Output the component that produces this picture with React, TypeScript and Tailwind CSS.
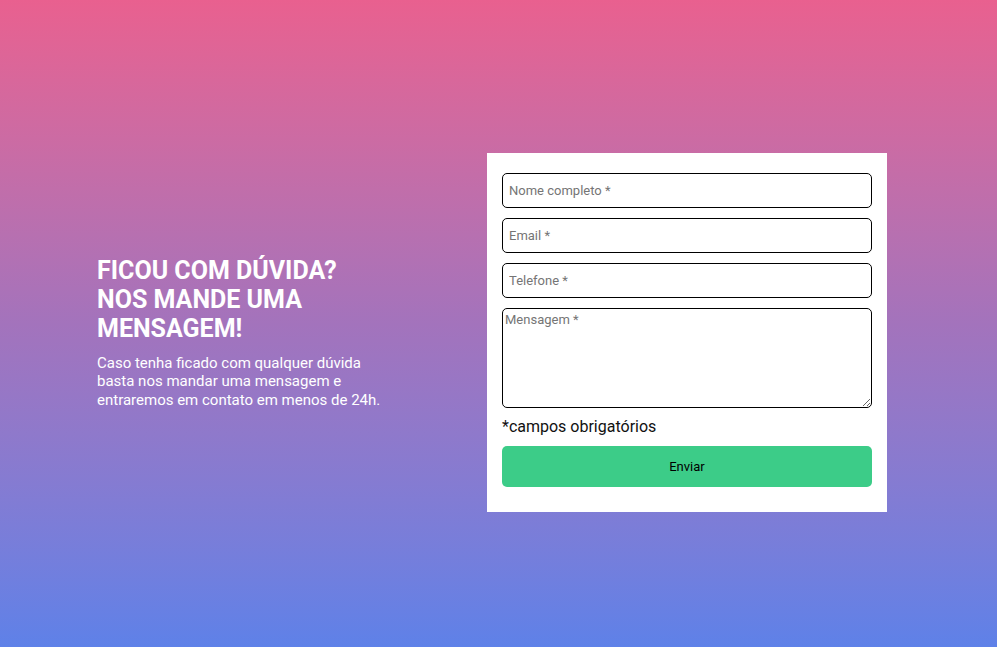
import React from "react";

export default function App() {
  return (
    <div
      className="w-full h-[647px] flex items-center pt-[18px] bg-gradient-to-b from-[#e9608f] via-[#a373bc] to-[#5e81e8]"
      style={{ fontFamily: "Roboto, 'Liberation Sans', sans-serif" }}
    >
      <div className="flex items-center pl-[97px]">
        <div className="w-[390px] pr-[105px] text-white">
          <h1 className="text-[25px] leading-[29px] font-bold">FICOU COM DÚVIDA? NOS MANDE UMA MENSAGEM!</h1>
          <p className="mt-[11px] text-[15px] leading-[18.5px]">
            Caso tenha ficado com qualquer dúvida basta nos mandar uma mensagem e entraremos em contato em menos de 24h.
          </p>
        </div>
        <div className="w-[400px] bg-white pt-[20px] pb-[25px] px-[15px]">
          <form className="flex flex-col" onSubmit={(e) => e.preventDefault()}>
            <input
              placeholder="Nome completo *"
              className="h-[35px] border border-black rounded-[5px] px-[6px] text-[13px] placeholder:text-[#757575] outline-none"
            />
            <input
              placeholder="Email *"
              className="mt-[10px] h-[35px] border border-black rounded-[5px] px-[6px] text-[13px] placeholder:text-[#757575] outline-none"
            />
            <input
              placeholder="Telefone *"
              className="mt-[10px] h-[35px] border border-black rounded-[5px] px-[6px] text-[13px] placeholder:text-[#757575] outline-none"
            />
            <textarea
              placeholder="Mensagem *"
              className="mt-[10px] h-[100px] border border-black rounded-[5px] px-[2px] py-[1px] text-[13px] placeholder:text-[#757575] outline-none resize-y"
            />
            <p className="mt-[9px] text-[16px] leading-[20px] text-[#111]">*campos obrigatórios</p>
            <button
              type="submit"
              className="mt-[9px] h-[41px] rounded-[5px] bg-[#3ccc88] text-[13px] text-black"
            >
              Enviar
            </button>
          </form>
        </div>
      </div>
    </div>
  );
}
